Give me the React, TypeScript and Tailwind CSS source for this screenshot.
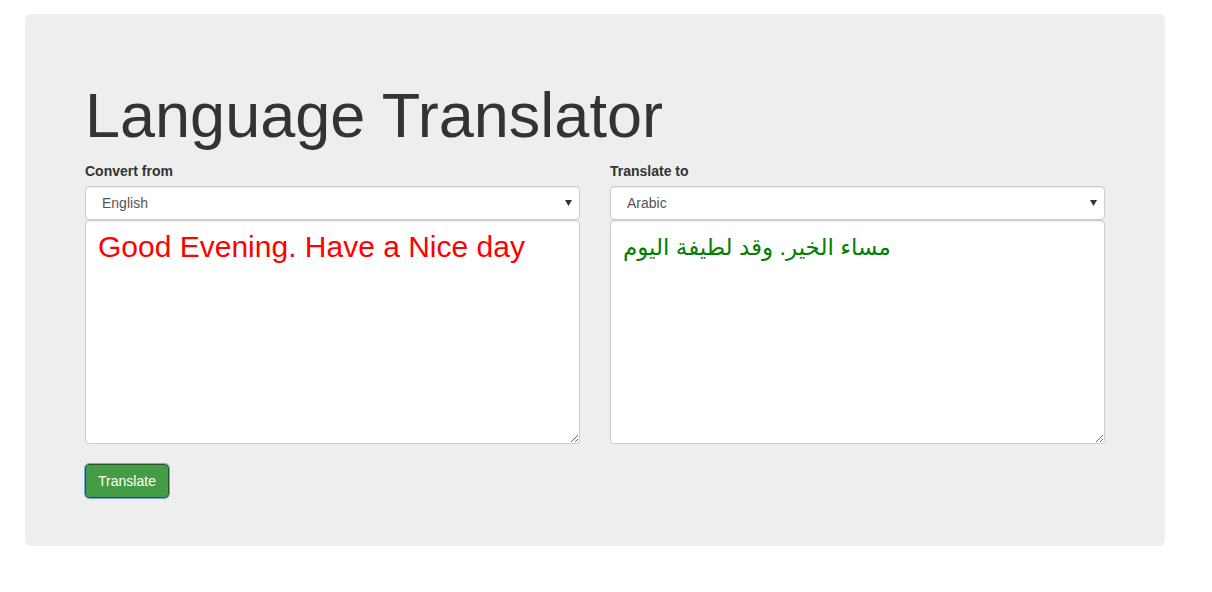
import type { FC } from 'react'

const LangSelect: FC<{ value: string }> = ({ value }) => {
  return (
    <div className="relative">
      <select
        defaultValue={value}
        className="block h-[34px] w-full appearance-none rounded-[4px] border border-[#ccc] bg-white pl-[16px] pr-6 text-[14px] text-[#555] shadow-[inset_0_1px_1px_rgba(0,0,0,0.075)] outline-none"
      >
        <option>{value}</option>
      </select>
      <svg
        className="pointer-events-none absolute right-[8px] top-[14px]"
        width="7"
        height="6"
        viewBox="0 0 7 6"
      >
        <path d="M0 0h7L3.5 6z" fill="#333" />
      </svg>
    </div>
  )
}

const Pane: FC<{ label: string; lang: string; text: string; tone: string }> = (props) => {
  return (
    <div className="flex flex-col">
      <label className="mb-[5px] text-[14px] font-bold leading-[20px] text-[#333]">
        {props.label}
      </label>
      <LangSelect value={props.lang} />
      <textarea
        defaultValue={props.text}
        className={`block h-[224px] w-full rounded-[4px] border border-[#ccc] bg-white px-[12px] py-[6px] leading-[40px] shadow-[inset_0_1px_1px_rgba(0,0,0,0.075)] outline-none ${props.tone}`}
      />
    </div>
  )
}

export default function App() {
  return (
    <div className="min-h-[592px] bg-white font-['Liberation_Sans','DejaVu_Sans',Arial,sans-serif]">
      <div className="ml-[25px] mt-[14px] h-[532px] w-[1140px] rounded-[6px] bg-[#eee] px-[60px] pt-[67px]">
        <h1 className="text-[63px] font-normal leading-[69px] text-[#333]">Language Translator</h1>
        <div className="mt-[11px] grid grid-cols-2 gap-[30px]">
          <Pane
            label="Convert from"
            lang="English"
            text="Good Evening. Have a Nice day"
            tone="text-[30px] text-[#ff0000]"
          />
          <Pane
            label="Translate to"
            lang="Arabic"
            text="مساء الخير. وقد لطيفة اليوم"
            tone="text-[23px] text-[#008000]"
          />
        </div>
        <button className="mt-[20px] h-[34px] w-[84px] rounded-[4px] border border-[#255625] bg-[#449d44] text-[14px] text-white outline outline-1 outline-[#7aa7e6]">
          Translate
        </button>
      </div>
    </div>
  )
}
